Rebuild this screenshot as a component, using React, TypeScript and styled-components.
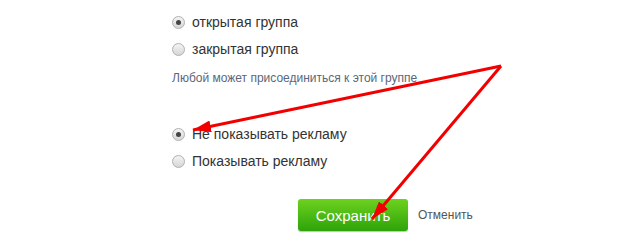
import styled, { createGlobalStyle } from 'styled-components';

const GlobalStyle = createGlobalStyle`
  body {
    margin: 0;
    background: #fff;
    font-family: Arial, "Liberation Sans", sans-serif;
  }
`;

interface RadioProps {
  label: string;
  checked?: boolean;
}

const Radio = ({ label, checked }: RadioProps) => (
  <RadioRow>
    <Circle $checked={checked} />
    <span>{label}</span>
  </RadioRow>
);

const App = () => {
  return (
    <Page>
      <GlobalStyle />
      <Form>
        <Group>
          <Radio label="открытая группа" checked />
          <Radio label="закрытая группа" />
        </Group>
        <Note>Любой может присоединиться к этой группе</Note>
        <Group className="ads">
          <Radio label="Не показывать рекламу" checked />
          <Radio label="Показывать рекламу" />
        </Group>
        <Actions>
          <SaveButton>Сохранить</SaveButton>
          <CancelLink>Отменить</CancelLink>
        </Actions>
      </Form>
      <Arrows width="622" height="246" viewBox="0 0 622 246">
        <defs>
          <marker
            id="head"
            markerWidth="6"
            markerHeight="4"
            refX="6"
            refY="2"
            orient="auto"
            markerUnits="strokeWidth">
            <path d="M0,0 L6,2 L0,4 z" fill="#f20000" />
          </marker>
        </defs>
        <line x1="501" y1="66" x2="193" y2="130" stroke="#f20000" strokeWidth="3" markerEnd="url(#head)" />
        <line x1="501" y1="66" x2="372" y2="219" stroke="#f20000" strokeWidth="3" markerEnd="url(#head)" />
      </Arrows>
    </Page>
  );
};

const Page = styled.div`
  position: relative;
  width: 622px;
  height: 246px;
  overflow: hidden;
`;

const Form = styled.div`
  display: flex;
  flex-direction: column;
  padding: 13px 0 0 172px;
`;

const Group = styled.div`
  display: flex;
  flex-direction: column;
  gap: 9px;

  &.ads {
    margin-top: 40px;
  }
`;

const RadioRow = styled.label`
  display: flex;
  align-items: center;
  gap: 7px;
  height: 18px;
  font-size: 14px;
  color: #333;
`;

const Circle = styled.span<{ $checked?: boolean }>`
  position: relative;
  width: 13px;
  height: 13px;
  box-sizing: border-box;
  border-radius: 50%;
  border: 1px solid #b0b0b0;
  background: linear-gradient(#f4f4f4, #d6d6d6);

  &::after {
    content: '';
    display: ${({ $checked }) => ($checked ? 'block' : 'none')};
    position: absolute;
    left: 3px;
    top: 3px;
    width: 5px;
    height: 5px;
    border-radius: 50%;
    background: #444;
  }
`;

const Note = styled.p`
  margin: 13px 0 0;
  font-size: 12px;
  line-height: 14px;
  color: #5b6779;
`;

const Actions = styled.div`
  display: flex;
  align-items: center;
  gap: 10px;
  margin: 29px 0 0 126px;
`;

const SaveButton = styled.button`
  width: 110px;
  height: 32px;
  border: none;
  border-radius: 3px;
  background: linear-gradient(#6dd21f, #2ea30a);
  box-shadow: 0 1px 1px rgba(0, 0, 0, 0.25);
  color: #fff;
  font-family: Arial, "Liberation Sans", sans-serif;
  font-size: 15px;
  cursor: pointer;
`;

const CancelLink = styled.a`
  font-size: 12px;
  color: #555;
  cursor: pointer;
`;

const Arrows = styled.svg`
  position: absolute;
  left: 0;
  top: 0;
  pointer-events: none;
`;

export default App;
